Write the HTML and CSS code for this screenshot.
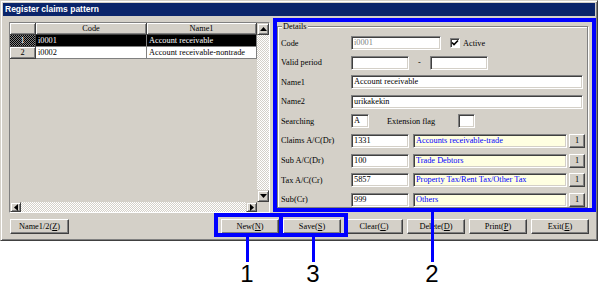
FILE: index.html
```html
<!DOCTYPE html>
<html>
<head>
<meta charset="utf-8">
<title>Register claims pattern</title>
<link rel="stylesheet" href="styles.css">
</head>
<body>
<div class="window">
  <div class="titlebar">Register claims pattern</div>
  <div class="main">
    <div class="grid">
      <div class="table">
        <div class="tr head">
          <div class="rh"></div>
          <div class="th code">Code</div>
          <div class="th name">Name1</div>
        </div>
        <div class="tr sel">
          <div class="rh">1</div>
          <div class="td code">i0001</div>
          <div class="td name">Account receivable</div>
        </div>
        <div class="tr">
          <div class="rh">2</div>
          <div class="td code">i0002</div>
          <div class="td name">Account receivable-nontrade</div>
        </div>
      </div>
      <div class="vscroll">
        <div class="sbtn v"><svg width="7" height="4" viewBox="0 0 7 4"><polygon points="3.5,0 7,4 0,4" fill="#000"/></svg></div>
        <div class="track"></div>
        <div class="sbtn v"><svg width="7" height="4" viewBox="0 0 7 4"><polygon points="0,0 7,0 3.5,4" fill="#000"/></svg></div>
      </div>
      <div class="hscroll">
        <div class="sbtn h"><svg width="4" height="7" viewBox="0 0 4 7"><polygon points="4,0 4,7 0,3.5" fill="#000"/></svg></div>
        <div class="track"></div>
        <div class="sbtn h"><svg width="4" height="7" viewBox="0 0 4 7"><polygon points="0,0 4,3.5 0,7" fill="#000"/></svg></div>
      </div>
      <div class="corner"></div>
    </div>

    <fieldset class="details">
      <legend>Details</legend>
      <div class="rows">
        <div class="row">
          <span class="lbl">Code</span>
          <span class="field w90 dis">i0001</span>
          <span class="check"><svg width="8" height="8" viewBox="0 0 8 8"><polyline points="1,3.5 3,5.5 7,1.5" fill="none" stroke="#000" stroke-width="1.6"/></svg></span>
          <span class="check-lbl">Active</span>
        </div>
        <div class="row">
          <span class="lbl">Valid period</span>
          <span class="field w58"></span>
          <span class="dash">-</span>
          <span class="field w58"></span>
        </div>
        <div class="row">
          <span class="lbl">Name1</span>
          <span class="field w232">Account receivable</span>
        </div>
        <div class="row">
          <span class="lbl">Name2</span>
          <span class="field w232">urikakekin</span>
        </div>
        <div class="row">
          <span class="lbl">Searching</span>
          <span class="field w18">A</span>
          <span class="ext-lbl">Extension flag</span>
          <span class="field w17"></span>
        </div>
        <div class="row">
          <span class="lbl">Claims A/C(Dr)</span>
          <span class="field w58">1331</span>
          <span class="field ref">Accounts receivable-trade</span>
          <span class="mini">1</span>
        </div>
        <div class="row">
          <span class="lbl">Sub A/C(Dr)</span>
          <span class="field w58">100</span>
          <span class="field ref">Trade Debtors</span>
          <span class="mini">1</span>
        </div>
        <div class="row">
          <span class="lbl">Tax A/C(Cr)</span>
          <span class="field w58">5857</span>
          <span class="field ref">Property Tax/Rent Tax/Other Tax</span>
          <span class="mini">1</span>
        </div>
        <div class="row">
          <span class="lbl">Sub(Cr)</span>
          <span class="field w58">999</span>
          <span class="field ref">Others</span>
          <span class="mini">1</span>
        </div>
      </div>
    </fieldset>
  </div>

  <div class="buttons">
    <span class="btn wide">Name1/2(<u>Z</u>)</span>
    <div class="btn-group">
      <span class="btn">New(<u>N</u>)</span>
      <span class="btn">Save(<u>S</u>)</span>
      <span class="btn">Clear(<u>C</u>)</span>
      <span class="btn">Delete(<u>D</u>)</span>
      <span class="btn">Print(<u>P</u>)</span>
      <span class="btn">Exit(<u>E</u>)</span>
    </div>
  </div>
</div>

<div class="hl hl-details"></div>
<div class="hl hl-new"></div>
<div class="hl hl-save"></div>
<div class="lead lead-1"></div>
<div class="lead lead-3"></div>
<div class="lead lead-2"></div>
<div class="num num-1">1</div>
<div class="num num-3">3</div>
<div class="num num-2">2</div>
</body>
</html>
```

FILE: styles.css
```css
* { box-sizing: border-box; }

html, body {
  margin: 0;
  padding: 0;
  background: #fff;
}

body {
  width: 600px;
  height: 291px;
  position: relative;
  overflow: hidden;
  font-family: "Liberation Serif", serif;
  font-size: 8.3px;
  color: #000;
}

.window {
  width: 598px;
  height: 241px;
  background: #d4d0c8;
  border: 1px solid;
  border-color: #d4d0c8 #404040 #404040 #d4d0c8;
  box-shadow: inset 1px 1px 0 #fff, inset -1px -1px 0 #808080;
  padding: 2px;
  display: flex;
  flex-direction: column;
}

.titlebar {
  height: 13px;
  background: #0a246a;
  color: #fff;
  font: bold 8.5px/13px "Liberation Sans", sans-serif;
  padding-left: 2px;
  white-space: nowrap;
}

.main {
  display: flex;
  align-items: flex-start;
  gap: 7px;
  margin-top: 6px;
  height: 191px;
  padding-left: 6px;
}

/* ---------- grid ---------- */
.grid {
  width: 261px;
  height: 191px;
  flex: none;
  border: 1px solid;
  border-color: #808080 #fff #fff #808080;
  display: grid;
  grid-template-columns: 247px 12px;
  grid-template-rows: 179px 10px;
}

.table {
  background: #d4d0c8;
  overflow: hidden;
}

.tr {
  display: flex;
  height: 12px;
  line-height: 11px;
  white-space: nowrap;
}

.rh {
  width: 26px;
  flex: none;
  background: #d4d0c8;
  border-right: 1px solid #404040;
  border-bottom: 1px solid #404040;
  box-shadow: inset 1px 1px 0 #fff, inset -1px -1px 0 #808080;
  text-align: center;
}

.code { width: 111px; flex: none; }
.name { width: 110px; flex: none; }

.th {
  background: #d4d0c8;
  border-right: 1px solid #404040;
  border-bottom: 1px solid #404040;
  box-shadow: inset 1px 1px 0 #fff, inset -1px -1px 0 #808080;
  text-align: center;
}

.td {
  background: #fff;
  border-right: 1px solid #808080;
  border-bottom: 1px solid #808080;
  padding-left: 2px;
  overflow: hidden;
}

.tr.sel .td {
  background: #000;
  color: #fff;
}

.tr.sel .rh {
  background: repeating-conic-gradient(#000 0 25%, #808080 0 50%) 0 0 / 2px 2px;
  color: #fff;
  box-shadow: none;
}

.vscroll {
  display: flex;
  flex-direction: column;
}

.hscroll {
  display: flex;
}

.track {
  flex: 1;
  background: repeating-conic-gradient(#fff 0 25%, #d4d0c8 0 50%) 0 0 / 2px 2px;
}

.sbtn {
  flex: none;
  background: #d4d0c8;
  border: 1px solid;
  border-color: #d4d0c8 #404040 #404040 #d4d0c8;
  box-shadow: inset 1px 1px 0 #fff, inset -1px -1px 0 #808080;
  display: flex;
  align-items: center;
  justify-content: center;
}

.sbtn.v { width: 12px; height: 12px; }
.sbtn.h { width: 11px; height: 10px; }
.sbtn svg { display: block; }

.corner { background: #d4d0c8; }

/* ---------- details ---------- */
.details {
  width: 311px;
  height: 187px;
  flex: none;
  margin: -1px 0 0 0;
  padding: 4px 4px 0 3px;
  min-width: 0;
  border: 1px solid #808080;
  box-shadow: inset 1px 1px 0 #fff, 1px 1px 0 #fff;
}

.details legend {
  font-size: 8.3px;
  line-height: 11px;
  padding: 0 1px;
  margin-left: 1px;
  background: #d4d0c8;
}

.rows {
  display: flex;
  flex-direction: column;
  gap: 5.6px;
}

.row {
  display: flex;
  align-items: center;
  height: 14px;
  white-space: nowrap;
}

.lbl {
  width: 70px;
  flex: none;
}

.field {
  height: 14px;
  flex: none;
  background: #fff;
  border: 1px solid;
  border-color: #808080 #fff #fff #808080;
  box-shadow: inset 1px 1px 0 #404040, inset -1px -1px 0 #d4d0c8;
  padding-left: 2px;
  line-height: 12px;
  overflow: hidden;
}

.field.dis { color: #808080; }
.w90 { width: 90px; }
.w58 { width: 58px; }
.w232 { width: 232px; }
.w18 { width: 18px; }
.w17 { width: 17px; }

.field.ref {
  width: 154px;
  margin-left: 4px;
  background: #ffffe1;
  color: #0000ff;
}

.mini {
  width: 16px;
  height: 14px;
  margin-left: 2px;
  flex: none;
  background: #d4d0c8;
  border: 1px solid;
  border-color: #fff #404040 #404040 #fff;
  box-shadow: inset -1px -1px 0 #808080;
  text-align: center;
  line-height: 12px;
}

.check {
  width: 10px;
  height: 10px;
  margin-left: 9px;
  flex: none;
  background: #fff;
  border: 1px solid;
  border-color: #808080 #fff #fff #808080;
  box-shadow: inset 1px 1px 0 #404040;
  display: flex;
  align-items: center;
  justify-content: center;
}

.check svg { display: block; }

.check-lbl { margin-left: 3px; }

.dash {
  width: 21px;
  text-align: center;
  flex: none;
}

.ext-lbl {
  width: 71px;
  margin-left: 18px;
  flex: none;
}

/* ---------- buttons ---------- */
.buttons {
  display: flex;
  justify-content: space-between;
  margin-top: 6px;
  padding: 0 6px 0 7px;
  height: 15px;
}

.btn-group {
  display: flex;
  gap: 4px;
}

.btn {
  width: 58px;
  height: 15px;
  background: #d4d0c8;
  border: 1px solid;
  border-color: #fff #404040 #404040 #fff;
  box-shadow: inset -1px -1px 0 #808080;
  text-align: center;
  line-height: 13px;
  white-space: nowrap;
}

.btn.wide { width: 59px; }

/* ---------- annotations ---------- */
.hl {
  position: absolute;
  border: 4px solid #0000ff;
}

.hl-details { left: 273px; top: 18px; width: 323px; height: 194px; }
.hl-new { left: 214px; top: 213px; width: 69px; height: 24px; }
.hl-save { left: 279px; top: 213px; width: 69px; height: 24px; }

.lead {
  position: absolute;
  width: 3px;
  background: #0000ff;
}

.lead-1 { left: 246px; top: 236px; height: 26px; }
.lead-3 { left: 312px; top: 236px; height: 26px; }
.lead-2 { left: 431px; top: 211px; height: 51px; }

.num {
  position: absolute;
  top: 262px;
  width: 20px;
  text-align: center;
  font: 24px/24px "Liberation Sans", sans-serif;
  color: #000;
}

.num-1 { left: 237px; }
.num-3 { left: 303px; }
.num-2 { left: 422px; }
```
